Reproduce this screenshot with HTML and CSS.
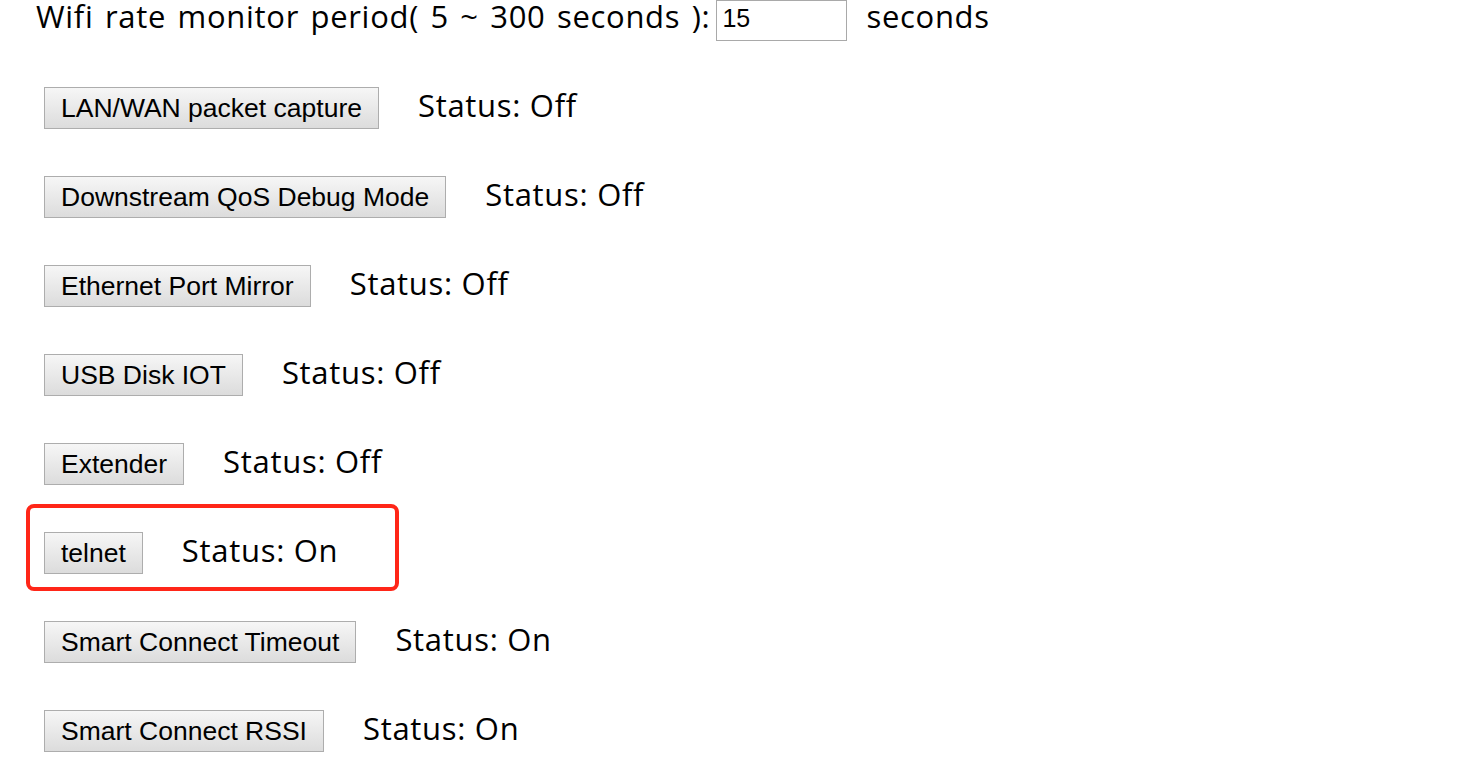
FILE: index.html
```html
<!DOCTYPE html>
<html>
<head>
<meta charset="utf-8">
<link rel="stylesheet" href="styles.css">
</head>
<body>
<div class="page">
  <div class="period">
    <span class="label">Wifi rate monitor period( 5 ~ 300 seconds ):</span>
    <input class="num" type="text" value="15">
    <span class="label unit">seconds</span>
  </div>
  <div class="rows">
    <div class="row"><button class="btn">LAN/WAN packet capture</button><span class="status">Status: Off</span></div>
    <div class="row"><button class="btn">Downstream QoS Debug Mode</button><span class="status">Status: Off</span></div>
    <div class="row"><button class="btn">Ethernet Port Mirror</button><span class="status">Status: Off</span></div>
    <div class="row"><button class="btn">USB Disk IOT</button><span class="status">Status: Off</span></div>
    <div class="row"><button class="btn">Extender</button><span class="status">Status: Off</span></div>
    <div class="row highlighted"><button class="btn">telnet</button><span class="status">Status: On</span><span class="mark"></span></div>
    <div class="row"><button class="btn">Smart Connect Timeout</button><span class="status">Status: On</span></div>
    <div class="row"><button class="btn">Smart Connect RSSI</button><span class="status">Status: On</span></div>
  </div>
</div>
</body>
</html>
```
FILE: styles.css
```css
html, body {
  margin: 0;
  padding: 0;
  background: #ffffff;
}
.page {
  font-family: "Open Sans", "Noto Sans", sans-serif;
  color: #000;
  padding: 0 0 0 36px;
}
.period {
  display: flex;
  align-items: flex-start;
  height: 41px;
}
.label {
  font-size: 31px;
  line-height: 32px;
  letter-spacing: 0.7px;
  word-spacing: 2.7px;
  white-space: nowrap;
}
.num {
  box-sizing: border-box;
  width: 131px;
  height: 41px;
  margin: 0 19px 0 6px;
  padding: 0 5px 4px;
  border: 1px solid #a9a9a9;
  font-family: "Liberation Sans", Arial, sans-serif;
  font-size: 25px;
  color: #000;
  outline: none;
}
.rows {
  display: flex;
  flex-direction: column;
  gap: 47px;
  padding: 46px 0 0 8px;
}
.row {
  display: flex;
  align-items: center;
  height: 42px;
  position: relative;
}
.btn {
  box-sizing: border-box;
  height: 42px;
  padding: 0 16px;
  border: 1px solid #adadad;
  border-radius: 0;
  background: linear-gradient(#f6f6f6, #dcdcdc);
  font-family: "Liberation Sans", Arial, sans-serif;
  font-size: 26.5px;
  color: #000;
  line-height: 40px;
}
.status {
  margin-left: 39px;
  font-size: 31px;
  line-height: 36px;
  letter-spacing: 0.7px;
  white-space: nowrap;
  position: relative;
  top: -3px;
}
.mark {
  position: absolute;
  left: -18px;
  top: -28px;
  width: 373px;
  height: 87px;
  box-sizing: border-box;
  border: 4px solid #ff2618;
  border-radius: 8px;
  pointer-events: none;
}
```
